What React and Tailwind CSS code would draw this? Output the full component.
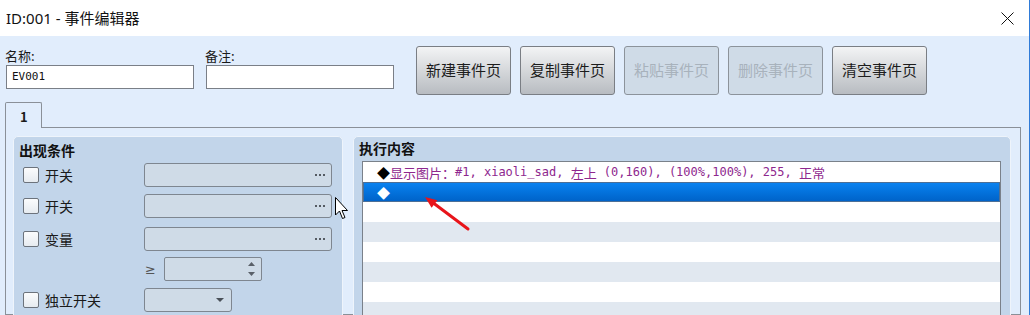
import React from "react";

const CJK = { fontFamily: '"Noto Sans CJK SC", "Noto Sans", sans-serif' };

function Dots() {
  return (
    <div className="flex gap-[2px] items-center">
      <div className="w-[2px] h-[2px] bg-[#555b62]" />
      <div className="w-[2px] h-[2px] bg-[#555b62]" />
      <div className="w-[2px] h-[2px] bg-[#555b62]" />
    </div>
  );
}

function Checkbox() {
  return (
    <div className="w-[16px] h-[16px] rounded-[2px] border border-[#6c737c] bg-gradient-to-b from-[#fbfcfd] to-[#e6ebf0]" />
  );
}

function CondRow({ label, mt, children }) {
  return (
    <div className={`flex items-center h-[24px] ${mt}`}>
      <div className="w-[130px] pl-[9px] flex items-center gap-[6px] shrink-0">
        {label !== null && <Checkbox />}
        {label !== null && (
          <span className="text-[14px] text-[#1a1a1a] leading-none" style={CJK}>
            {label}
          </span>
        )}
      </div>
      {children}
    </div>
  );
}

function Field({ w = "w-[188px]", children }) {
  return (
    <div
      className={`${w} h-[24px] rounded-[3px] border border-[#7e8690] bg-[#cfdbe7] flex items-center justify-end pr-[6px]`}
    >
      {children}
    </div>
  );
}

function Btn({ label, disabled }) {
  return (
    <div
      className={`w-[95px] h-[49px] rounded-[3px] border flex items-center justify-center text-[15px] ${
        disabled
          ? "border-[#8c939b] bg-[#cfdbe7] text-[#a8b2bc]"
          : "border-[#7a7e84] bg-gradient-to-b from-[#f3f4f5] to-[#b8bcc1] text-[#1c1c1c]"
      }`}
      style={CJK}
    >
      {label}
    </div>
  );
}

const MONO = { fontFamily: '"DejaVu Sans Mono", "Liberation Mono", monospace' };

export default function App() {
  const rows = Array.from({ length: 8 });
  return (
    <div className="relative w-[1030px] h-[315px] overflow-hidden bg-[#e1edfc] border-r border-[#2f7bd8] flex flex-col">
      {/* title bar */}
      <div className="h-[36px] shrink-0 bg-white flex items-center justify-between pl-[6px] pr-[15px]">
        <span
          className="text-[15px] text-[#111]"
          style={{ fontFamily: '"Noto Sans", "Noto Sans CJK SC", sans-serif' }}
        >
          ID:001 - 事件编辑器
        </span>
        <svg width="13" height="13" viewBox="0 0 13 13">
          <path d="M0.5 0.5 L12.5 12.5 M12.5 0.5 L0.5 12.5" stroke="#111" strokeWidth="1" />
        </svg>
      </div>

      {/* header */}
      <div className="flex pt-[10px] pl-[6px] shrink-0">
        <div className="flex flex-col w-[188px]">
          <div className="h-[19px] leading-[19px] text-[13px] text-[#1a1a1a] -ml-[1px]" style={CJK}>
            名称:
          </div>
          <div className="h-[24px] border border-[#7a7f87] bg-white flex items-center pl-[5px] text-[11px] text-[#111]" style={MONO}>
            EV001
          </div>
        </div>
        <div className="flex flex-col w-[188px] ml-[12px]">
          <div className="h-[19px] leading-[19px] text-[13px] text-[#1a1a1a] -ml-[1px]" style={CJK}>
            备注:
          </div>
          <div className="h-[24px] border border-[#7a7f87] bg-white" />
        </div>
        <div className="flex gap-[9px] ml-[22px]">
          <Btn label="新建事件页" />
          <Btn label="复制事件页" />
          <Btn label="粘贴事件页" disabled />
          <Btn label="删除事件页" disabled />
          <Btn label="清空事件页" />
        </div>
      </div>

      {/* tabs */}
      <div className="flex px-[5px] mt-[7px] shrink-0">
        <div className="relative z-10 w-[37px] h-[26px] -mb-[1px] border border-b-0 border-[#8a9098] rounded-t-[2px] bg-[#e1edfc] pl-[14px] pt-[4px] text-[13px] font-bold text-[#1a1a1a]" style={CJK}>
          1
        </div>
      </div>

      {/* tab page */}
      <div className="ml-[5px] w-[1016px] flex-1 border border-[#8a9098] flex pl-[7px] pr-[9px] pt-[8px] gap-[10px] min-h-0">
        {/* left group */}
        <div className="w-[330px] shrink-0 h-[300px] rounded-[5px] border border-[#eef4fb] bg-[#c2d5ea] pt-[3px] pl-[5px] flex flex-col">
          <div className="h-[20px] leading-[20px] text-[14px] font-bold text-[#111]" style={CJK}>
            出现条件
          </div>
          <div className="-ml-[5px]">
            <CondRow label="开关" mt="mt-[3px]">
              <Field><Dots /></Field>
            </CondRow>
            <CondRow label="开关" mt="mt-[7px]">
              <Field><Dots /></Field>
            </CondRow>
            <CondRow label="变量" mt="mt-[9px]">
              <Field><Dots /></Field>
            </CondRow>
            <CondRow label={null} mt="mt-[6px]">
              <div className="w-[20px] pl-[1px] text-[13px] text-[#555] leading-none" style={{ fontFamily: '"DejaVu Sans", sans-serif' }}>≥</div>
              <div className="w-[98px] h-[24px] rounded-[2px] border border-[#7e8690] bg-[#cfdbe7] flex flex-col items-end justify-center gap-[6px] pr-[6px]">
                <svg width="7" height="4" viewBox="0 0 7 4"><path d="M3.5 0 L7 4 L0 4 Z" fill="#5a6068" /></svg>
                <svg width="7" height="4" viewBox="0 0 7 4"><path d="M0 0 L7 0 L3.5 4 Z" fill="#5a6068" /></svg>
              </div>
            </CondRow>
            <CondRow label="独立开关" mt="mt-[7px]">
              <div className="w-[88px] h-[24px] rounded-[3px] border border-[#7e8690] bg-[#cfdbe7] flex items-center justify-end pr-[7px]">
                <svg width="8" height="4" viewBox="0 0 8 4"><path d="M0 0 L8 0 L4 4 Z" fill="#4a5058" /></svg>
              </div>
            </CondRow>
          </div>
        </div>

        {/* right group */}
        <div className="flex-1 h-[300px] rounded-[5px] border border-[#eef4fb] bg-[#c2d5ea] pt-[1px] pl-[5px] pr-[9px] flex flex-col">
          <div className="h-[20px] leading-[20px] text-[14px] font-bold text-[#111]" style={CJK}>
            执行内容
          </div>
          <div className="ml-[3px] mt-[3px] border border-[#7a818a] bg-white flex flex-col flex-1">
            {rows.map((_, i) => {
              if (i === 1) {
                return (
                  <div
                    key={i}
                    className="h-[20px] border border-[#4c6f96] bg-gradient-to-b from-[#0a82f0] to-[#0063c9] flex items-center pl-[13px]"
                  >
                    <span className="text-[13px] text-white leading-none" style={CJK}>◆</span>
                  </div>
                );
              }
              if (i === 0) {
                return (
                  <div key={i} className="h-[20px] bg-white flex items-center pl-[14px] whitespace-nowrap text-[#8e278e]">
                    <span className="text-[13px] text-black leading-none" style={CJK}>◆</span>
                    <span className="text-[13px] leading-none" style={CJK}>显示图片：</span>
                    <span className="text-[12px] leading-none" style={MONO}>#1, xiaoli_sad,&nbsp;</span>
                    <span className="text-[13px] leading-none" style={CJK}>左上</span>
                    <span className="text-[12px] leading-none" style={MONO}>&nbsp;(0,160), (100%,100%), 255,&nbsp;</span>
                    <span className="text-[13px] leading-none" style={CJK}>正常</span>
                  </div>
                );
              }
              return (
                <div key={i} className={`h-[20px] shrink-0 ${i % 2 === 0 ? "bg-white" : "bg-[#e1e8f0]"}`} />
              );
            })}
          </div>
        </div>
      </div>

      {/* mouse cursor */}
      <svg className="absolute left-[335px] top-[197px] pointer-events-none" width="14" height="24" viewBox="0 0 14 24">
        <path d="M0.5 0.5 L0.5 18 L4.5 14 L7.5 21.5 L10 20.5 L7 13.5 L12.5 13.5 Z" fill="white" stroke="black" strokeWidth="1" />
      </svg>

      {/* red annotation arrow */}
      <svg className="absolute left-0 top-0 pointer-events-none" width="1030" height="315" viewBox="0 0 1030 315">
        <line x1="432" y1="202" x2="468" y2="229" stroke="#e8141a" strokeWidth="3" strokeLinecap="round" />
        <path d="M425 197 L431.6 207.8 L437.4 200.2 Z" fill="#e8141a" />
      </svg>
    </div>
  );
}
